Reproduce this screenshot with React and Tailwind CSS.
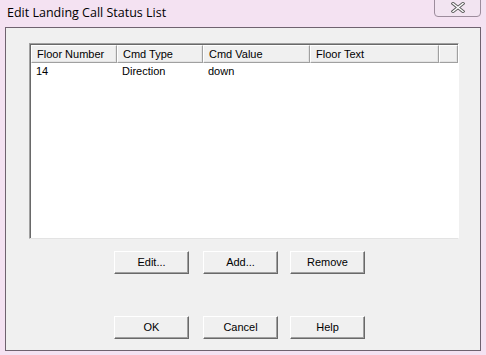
import React from "react";

function Btn({ children, className = "" }) {
  return (
    <div className={`w-[75px] h-[23px] flex items-center justify-center bg-[#f0f0f0] border border-t-white border-l-white border-r-[#696969] border-b-[#696969] shadow-[inset_-1px_-1px_0_#a0a0a0] text-[11px] text-black ${className}`}>
      {children}
    </div>
  );
}

function HeadCell({ w, children }) {
  return (
    <div
      className={`${w} h-full flex items-center pl-[5px] border border-t-white border-l-white border-r-[#a0a0a0] border-b-[#a0a0a0] shadow-[inset_-1px_-1px_0_#e3e3e3] text-[11px] text-black shrink-0`}
    >
      {children}
    </div>
  );
}

export default function App() {
  return (
    <div
      className="w-[486px] h-[355px] bg-[#f4e2f2] flex flex-col px-[5px] overflow-hidden"
      style={{ fontFamily: '"Liberation Sans", Arial, sans-serif' }}
    >
      <div className="h-[27px] flex items-start shrink-0 relative">
        <div
          className="text-[12.5px] text-black pl-[2px] pt-[4px]"
          style={{ fontFamily: '"Open Sans", "Noto Sans", sans-serif' }}
        >
          Edit Landing Call Status List
        </div>
        <div className="absolute left-[429px] top-[-2px] w-[47px] h-[19px] rounded-b-[4px] border border-[#9c8c9c] bg-[#f2e4f1] flex items-center justify-center">
          <svg width="14" height="11" viewBox="0 0 14 11">
            <path d="M2 1.5 L12 9.5 M12 1.5 L2 9.5" stroke="#5a5a5a" strokeWidth="3.2" strokeLinecap="square" />
            <path d="M2 1.5 L12 9.5 M12 1.5 L2 9.5" stroke="#ffffff" strokeWidth="1.4" strokeLinecap="square" />
          </svg>
        </div>
      </div>
      <div className="w-[476px] h-[324px] border border-[#6f626f] bg-[#f0f0f0] flex flex-col pl-[23px] pt-[15px] shrink-0">
        <div className="w-[430px] h-[196px] bg-white border border-t-[#a0a0a0] border-l-[#a0a0a0] border-r-white border-b-[#e3e3e3] shadow-[inset_1px_1px_0_#696969] pt-[1px] pl-[1px] flex flex-col">
          <div className="h-[18px] flex bg-[#f0f0f0] shrink-0">
            <HeadCell w="w-[86px]">Floor Number</HeadCell>
            <HeadCell w="w-[86px]">Cmd Type</HeadCell>
            <HeadCell w="w-[107px]">Cmd Value</HeadCell>
            <HeadCell w="w-[129px]">Floor Text</HeadCell>
            <HeadCell w="w-[19px]"></HeadCell>
          </div>
          <div className="h-[17px] flex items-center text-[11px] text-black">
            <div className="w-[86px] pl-[5px]">14</div>
            <div className="w-[86px] pl-[5px]">Direction</div>
            <div className="w-[107px] pl-[5px]">down</div>
            <div className="w-[129px] pl-[5px]"></div>
          </div>
        </div>
        <div className="flex ml-[85px] mt-[12px]">
          <Btn>Edit...</Btn>
          <Btn className="ml-[14px]">Add...</Btn>
          <Btn className="ml-[12px]">Remove</Btn>
        </div>
        <div className="flex ml-[85px] mt-[42px]">
          <Btn>OK</Btn>
          <Btn className="ml-[14px]">Cancel</Btn>
          <Btn className="ml-[12px]">Help</Btn>
        </div>
      </div>
    </div>
  );
}
